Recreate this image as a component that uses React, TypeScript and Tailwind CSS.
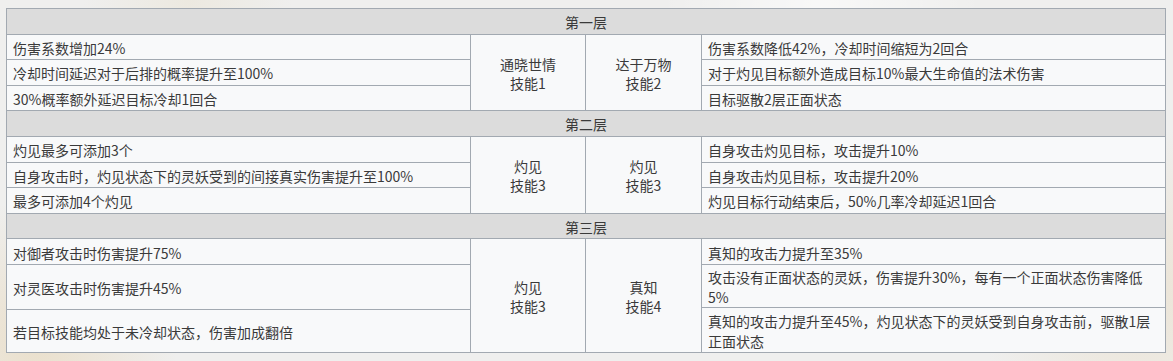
import React from "react";

type Sec = {
  title: string;
  left: { text: React.ReactNode; h: string }[];
  mid1: [string, string];
  mid2: [string, string];
  right: { text: React.ReactNode; h: string }[];
};

const R = "h-[25.6px]";

const sections: Sec[] = [
  {
    title: "第一层",
    left: [
      { text: "伤害系数增加24%", h: R },
      { text: "冷却时间延迟对于后排的概率提升至100%", h: R },
      { text: "30%概率额外延迟目标冷却1回合", h: R },
    ],
    mid1: ["通晓世情", "技能1"],
    mid2: ["达于万物", "技能2"],
    right: [
      { text: "伤害系数降低42%，冷却时间缩短为2回合", h: R },
      { text: "对于灼见目标额外造成目标10%最大生命值的法术伤害", h: R },
      { text: "目标驱散2层正面状态", h: R },
    ],
  },
  {
    title: "第二层",
    left: [
      { text: "灼见最多可添加3个", h: R },
      { text: "自身攻击时，灼见状态下的灵妖受到的间接真实伤害提升至100%", h: R },
      { text: "最多可添加4个灼见", h: R },
    ],
    mid1: ["灼见", "技能3"],
    mid2: ["灼见", "技能3"],
    right: [
      { text: "自身攻击灼见目标，攻击提升10%", h: R },
      { text: "自身攻击灼见目标，攻击提升20%", h: R },
      { text: "灼见目标行动结束后，50%几率冷却延迟1回合", h: R },
    ],
  },
  {
    title: "第三层",
    left: [
      { text: "对御者攻击时伤害提升75%", h: "h-[26px]" },
      { text: "对灵医攻击时伤害提升45%", h: "h-[44.3px]" },
      { text: "若目标技能均处于未冷却状态，伤害加成翻倍", h: "h-[43.7px]" },
    ],
    mid1: ["灼见", "技能3"],
    mid2: ["真知", "技能4"],
    right: [
      { text: "真知的攻击力提升至35%", h: "h-[26px]" },
      {
        text: (
          <>
            攻击没有正面状态的灵妖，伤害提升30%，每有一个正面状态伤害降低
            <br />
            5%
          </>
        ),
        h: "h-[42.6px]",
      },
      {
        text: (
          <>
            真知的攻击力提升至45%，灼见状态下的灵妖受到自身攻击前，驱散1层
            <br />
            正面状态
          </>
        ),
        h: "h-[45.4px]",
      },
    ],
  },
];

function Cell({ text, h }: { text: React.ReactNode; h: string }) {
  return (
    <div
      className={`${h} flex items-center border-r border-b border-[#a2a9b1] bg-[#f8f9fa] px-[6px] pt-[2px] leading-[20px] whitespace-nowrap`}
    >
      <div>{text}</div>
    </div>
  );
}

function Mid({ lines }: { lines: [string, string] }) {
  return (
    <div className="flex items-center justify-center border-r border-b border-[#a2a9b1] bg-[#f8f9fa] pt-[3px] text-center leading-[19px]">
      <div>
        {lines[0]}
        <br />
        {lines[1]}
      </div>
    </div>
  );
}

export default function App() {
  return (
    <div
      className="h-[361px] w-full overflow-hidden bg-[#efefee] bg-[radial-gradient(circle_at_3%_95%,rgba(225,195,140,0.35),transparent_12%),radial-gradient(circle_at_97%_80%,rgba(225,195,140,0.25),transparent_14%),radial-gradient(circle_at_16%_0%,rgba(225,205,160,0.18),transparent_10%),radial-gradient(circle_at_70%_2%,rgba(255,255,255,0.6),transparent_18%)] pl-[6px] pt-[8px] text-[14px] text-[#3a3a3a]"
      style={{ fontFamily: '"Noto Sans CJK SC", "Noto Sans", sans-serif' }}
    >
      <div className="w-[1160px] border-l border-t border-[#a2a9b1]">
        {sections.map((s) => (
          <div key={s.title}>
            <div className="flex h-[25.6px] items-center justify-center border-r border-b border-[#a2a9b1] bg-[#dcdcdc] pt-[2px]">
              {s.title}
            </div>
            <div className="grid grid-cols-[464px_115px_116px_464px]">
              <div className="flex flex-col">
                {s.left.map((c, i) => (
                  <Cell key={i} text={c.text} h={c.h} />
                ))}
              </div>
              <Mid lines={s.mid1} />
              <Mid lines={s.mid2} />
              <div className="flex flex-col">
                {s.right.map((c, i) => (
                  <Cell key={i} text={c.text} h={c.h} />
                ))}
              </div>
            </div>
          </div>
        ))}
      </div>
    </div>
  );
}
